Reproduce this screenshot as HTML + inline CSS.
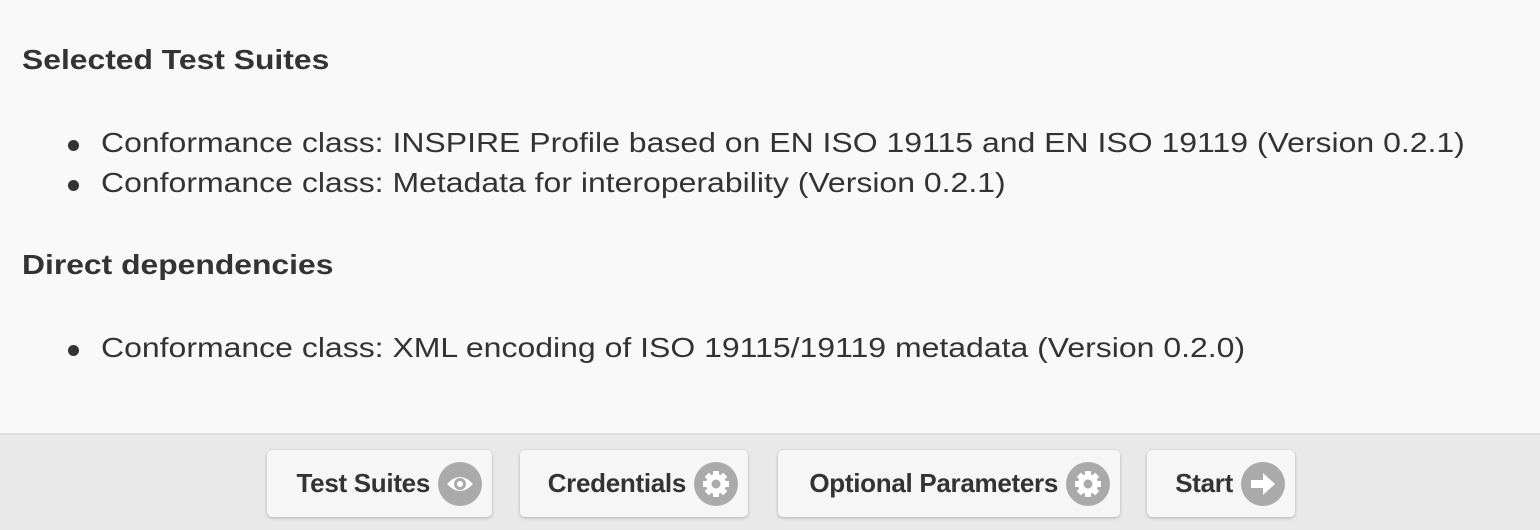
<!DOCTYPE html>
<html><head><meta charset="utf-8"><style>
html,body{margin:0;padding:0;}
body{width:1540px;height:528px;background:#f9f9f9;font-family:"Liberation Sans",Arial,sans-serif;color:#333;position:relative;overflow:hidden;}
h3{position:absolute;left:22px;margin:0;font-size:28px;font-weight:bold;line-height:32px;transform:scaleX(1.137);transform-origin:0 0;white-space:nowrap;}
.li{position:absolute;left:101px;font-size:28px;line-height:32px;white-space:nowrap;transform:scaleX(1.142);transform-origin:0 0;}
.dot{position:absolute;left:68px;width:11px;height:11px;border-radius:50%;background:#333;}
.footer{position:absolute;left:0;top:433px;width:1540px;height:95px;background:#e9e9e9;border-top:2px solid #dcdcdc;}
.btn{position:absolute;top:15px;height:67px;background:#f6f6f6;border-radius:5px;box-shadow:0 1px 3px rgba(0,0,0,.25);font-weight:bold;font-size:26px;display:flex;align-items:center;justify-content:flex-end;padding-right:10px;box-sizing:border-box;color:#333;}
.btn span{margin-right:8px;letter-spacing:-0.3px;}
.ic{width:44px;height:44px;border-radius:50%;background:#aaa;display:flex;align-items:center;justify-content:center;}
</style></head><body>
<h3 style="top:44px">Selected Test Suites</h3>
<div class="dot" style="top:140px"></div>
<div class="li" style="top:127px">Conformance class: INSPIRE Profile based on EN ISO 19115 and EN ISO 19119 (Version 0.2.1)</div>
<div class="dot" style="top:180px"></div>
<div class="li" style="top:167px">Conformance class: Metadata for interoperability (Version 0.2.1)</div>
<h3 style="top:249px">Direct dependencies</h3>
<div class="dot" style="top:345px"></div>
<div class="li" style="top:332px">Conformance class: XML encoding of ISO 19115/19119 metadata (Version 0.2.0)</div>
<div class="footer">
<div class="btn" style="left:267px;width:225px"><span>Test Suites</span><div class="ic"><svg width="30" height="30" viewBox="0 0 30 30"><path d="M2 15 Q15 1 28 15 Q15 29 2 15Z" fill="#fff"/><circle cx="15" cy="15" r="6" fill="#aaa"/><circle cx="15" cy="15" r="3" fill="#fff"/></svg></div></div>
<div class="btn" style="left:520px;width:228px"><span>Credentials</span><div class="ic"><svg width="30" height="30" viewBox="0 0 30 30"><g fill="#fff"><circle cx="15" cy="15" r="10"/><rect x="12" y="2" width="6" height="26"/><rect x="12" y="2" width="6" height="26" transform="rotate(45 15 15)"/><rect x="12" y="2" width="6" height="26" transform="rotate(90 15 15)"/><rect x="12" y="2" width="6" height="26" transform="rotate(135 15 15)"/></g><circle cx="15" cy="15" r="4.5" fill="#aaa"/></svg></div></div>
<div class="btn" style="left:778px;width:342px"><span>Optional Parameters</span><div class="ic"><svg width="30" height="30" viewBox="0 0 30 30"><g fill="#fff"><circle cx="15" cy="15" r="10"/><rect x="12" y="2" width="6" height="26"/><rect x="12" y="2" width="6" height="26" transform="rotate(45 15 15)"/><rect x="12" y="2" width="6" height="26" transform="rotate(90 15 15)"/><rect x="12" y="2" width="6" height="26" transform="rotate(135 15 15)"/></g><circle cx="15" cy="15" r="4.5" fill="#aaa"/></svg></div></div>
<div class="btn" style="left:1147px;width:148px"><span>Start</span><div class="ic"><svg width="30" height="30" viewBox="0 0 30 30"><path d="M3 11 H15 V4 L27 15 L15 26 V19 H3Z" fill="#fff"/></svg></div></div>
</div>
</body></html>
